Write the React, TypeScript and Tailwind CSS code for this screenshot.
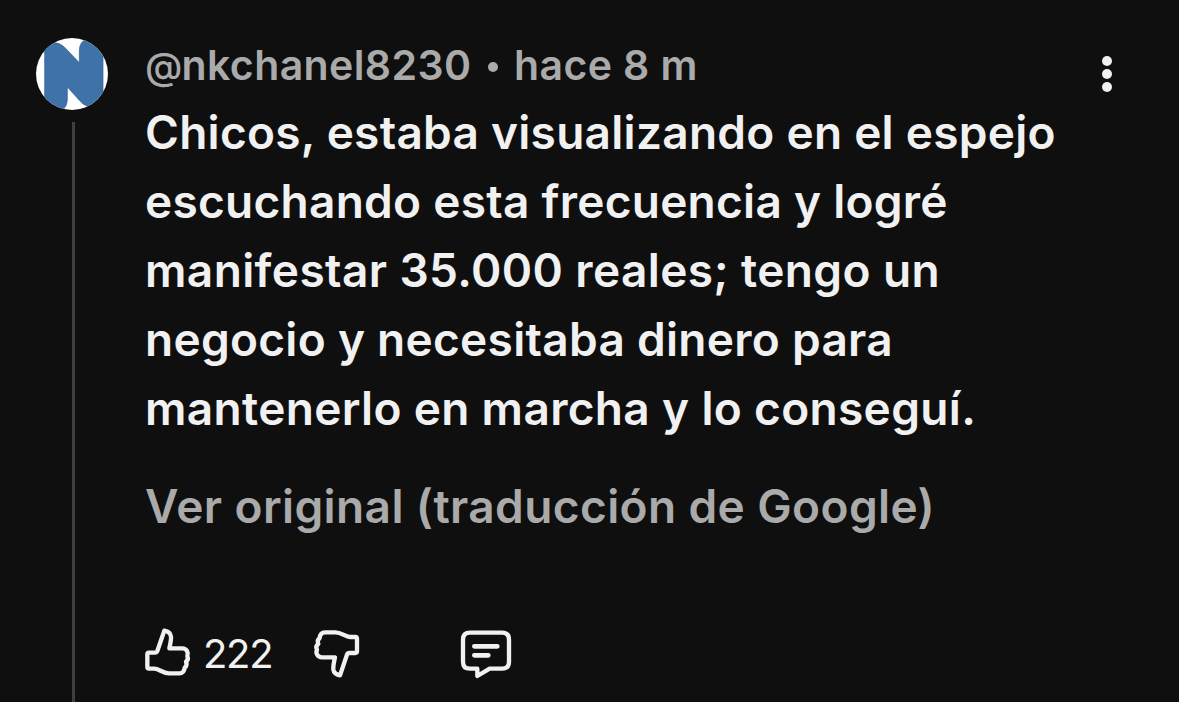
import React from 'react';

const body = [
  { text: 'Chicos, estaba visualizando en el espejo', tracking: 'tracking-[0.27px]' },
  { text: 'escuchando esta frecuencia y logré', tracking: 'tracking-[0.27px]' },
  { text: 'manifestar 35.000 reales; tengo un', tracking: 'tracking-[0.4px]' },
  { text: 'negocio y necesitaba dinero para', tracking: 'tracking-[0.29px]' },
  { text: 'mantenerlo en marcha y lo conseguí.', tracking: 'tracking-[0.34px]' },
];

function Avatar() {
  return (
    <svg className="h-[72px] w-[72px]" viewBox="48 39 216 216" aria-hidden="true">
      <defs>
        <clipPath id="avatar-circle"><circle cx="156" cy="147" r="108" /></clipPath>
      </defs>
      <g clipPath="url(#avatar-circle)">
        <path d="M48 39H264V255H48Z" fill="#fff" />
        <path d="M74 78Q79 53 103 53Q119 53 133 66L178 113V74Q179 52 198 42L200 30H260L249 95V230L235 260L202 244Q189 240 178 226L142 186V222Q142 242 129 254L74 260Z" fill="#3e72a9" stroke="#315f94" strokeWidth="2" />
      </g>
    </svg>
  );
}

function ThumbUp() {
  return (
    <svg className="h-[75px] w-[60px]" viewBox="0 0 180 225" fill="none" stroke="#f1f1f1" strokeWidth="13" strokeLinejoin="round" aria-hidden="true">
      <path d="M42 113H60Q65 113 67 108L88 47Q106 50 108 65Q109 73 103 100H142C155 100 161 112 157 123C160 130 158 136 153 140C157 148 154 154 149 158C148 169 142 175 133 175H102C83 175 72 161 58 161H42Q37 161 37 156V118Q37 113 42 113Z" />
    </svg>
  );
}

function ThumbDown() {
  return (
    <svg className="h-[75px] w-[60px]" viewBox="525 0 180 225" fill="none" stroke="#f1f1f1" strokeWidth="13" strokeLinejoin="round" aria-hidden="true">
      <path d="M661 66Q666 66 666 71V109Q666 114 661 114H643Q638 114 636 119L615 181Q597 177 595 163Q594 154 600 127H561C548 127 541 115 546 104C542 97 544 91 550 87C546 79 549 73 554 69C555 58 561 52 570 52H601C620 52 631 66 645 66Z" />
    </svg>
  );
}

function Comment() {
  return (
    <svg className="h-[75px] w-[80px]" viewBox="0 0 240 225" fill="none" stroke="#f1f1f1" strokeWidth="13" strokeLinejoin="round" strokeLinecap="round" aria-hidden="true">
      <path d="M75 53H171Q192 53 192 74V140Q192 161 171 161H134L97 183V161H75Q54 161 54 140V74Q54 53 75 53Z" />
      <path d="M88 94H157M88 121H130" strokeWidth="14" />
    </svg>
  );
}

export default function App() {
  return (
    <article className="flex h-[702px] w-[1179px] overflow-hidden bg-[#0f0f0f] font-['Inter',sans-serif]">
      <div className="flex w-[145px] shrink-0 flex-col pl-9 pt-[38px]">
        <Avatar />
        <div className="ml-9 mt-3 w-[3px] grow bg-[#3f3f3f]" />
      </div>
      <main className="flex grow flex-col pt-8">
        <header className="flex h-[66px] items-center whitespace-nowrap text-[41px] font-semibold leading-[66px] tracking-[0.4px] text-[#aaa]">
          <span className="w-[343px]"><span className="text-[38px] font-medium tracking-[-0.8px]">@</span>nkchanel8230</span>
          <span className="mt-1 h-[10px] w-[10px] rounded-full bg-[#aaa]" />
          <span className="ml-4">hace 8 m</span>
        </header>
        <div className="text-[46px] font-semibold leading-[69px] text-[#f1f1f1]">
          {body.map((l) => <p key={l.text} className={`w-fit whitespace-nowrap ${l.tracking}`}>{l.text}</p>)}
        </div>
        <p className="mt-[29px] w-fit whitespace-nowrap text-[46px] font-semibold leading-[69px] tracking-[0.4px] text-[#aaa]">Ver original (traducción de Google)</p>
        <footer className="mt-[74px] flex h-[75px] items-center">
          <button className="-ml-[10px]" aria-label="Me gusta"><ThumbUp /></button>
          <span className="ml-2 w-[107px] pt-[3px] text-[40px] leading-[60px] tracking-[-1.3px] text-[#f1f1f1]">222</span>
          <button aria-label="No me gusta"><ThumbDown /></button>
          <button className="ml-[75px]" aria-label="Responder"><Comment /></button>
        </footer>
      </main>
      <button className="mr-[67px] mt-[56px] flex h-9 w-[10px] shrink-0 flex-col justify-between" aria-label="Más opciones">
        <span className="h-[10px] w-[10px] rounded-full bg-[#f1f1f1]" />
        <span className="h-[10px] w-[10px] rounded-full bg-[#f1f1f1]" />
        <span className="h-[10px] w-[10px] rounded-full bg-[#f1f1f1]" />
      </button>
    </article>
  );
}
